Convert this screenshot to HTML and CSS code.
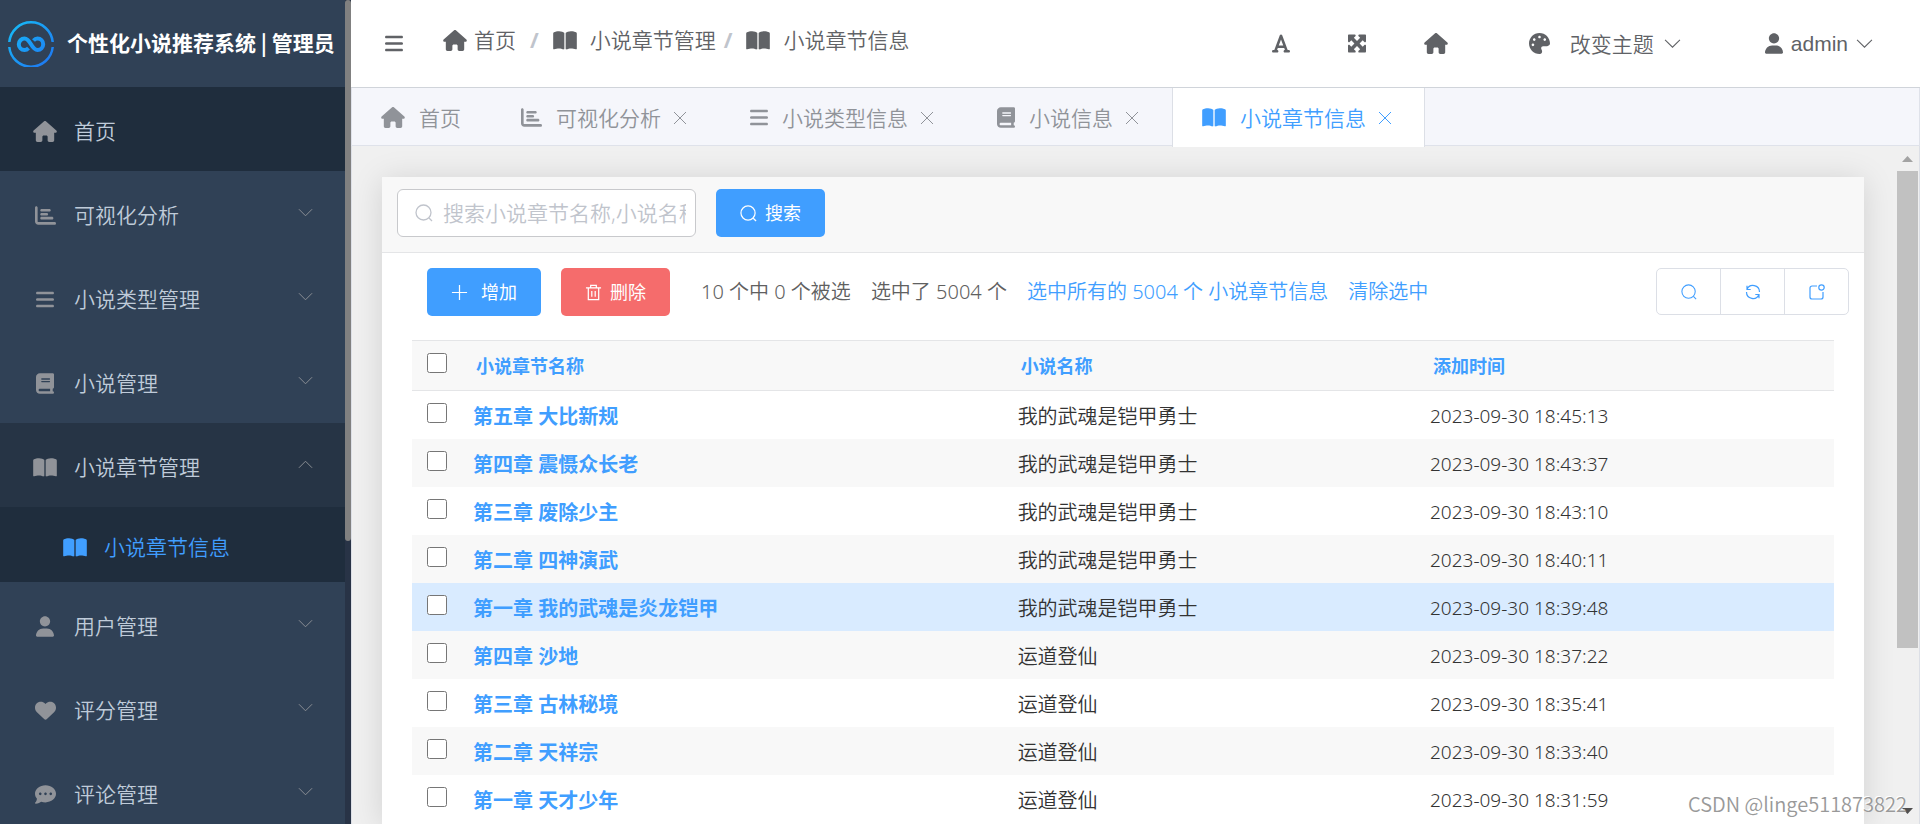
FILE: index.html
```html
<!DOCTYPE html>
<html lang="zh-CN">
<head>
<meta charset="utf-8">
<title>个性化小说推荐系统 | 管理员</title>
<link rel="stylesheet" href="styles.css">
</head>
<body>
<svg class="sprite" aria-hidden="true">
  <symbol id="i-home" viewBox="0 0 576 512"><path d="M575.8 255.5c0 18-15 32.1-32 32.1h-32l.7 160.2c0 2.7-.2 5.4-.5 8.1V472c0 22.1-17.9 40-40 40H392c-22.1 0-40-17.9-40-40V384c0-17.7-14.3-32-32-32H256c-17.7 0-32 14.3-32 32v88c0 22.1-17.9 40-40 40H104c-22.1 0-40-17.9-40-40V287.6H32c-18 0-32-14-32-32.1c0-9 3-17 10-24L266.4 8c7-7 15-8 22-8s15 2 21 7L564.8 231.5c8 7 12 15 11 24z"/></symbol>
  <symbol id="i-bars" viewBox="0 0 448 512"><path d="M0 96C0 78.3 14.3 64 32 64H416c17.7 0 32 14.3 32 32s-14.3 32-32 32H32C14.3 128 0 113.7 0 96zM0 256c0-17.7 14.3-32 32-32H416c17.7 0 32 14.3 32 32s-14.3 32-32 32H32c-17.7 0-32-14.3-32-32zM448 416c0 17.7-14.3 32-32 32H32c-17.7 0-32-14.3-32-32s14.3-32 32-32H416c17.7 0 32 14.3 32 32z"/></symbol>
  <symbol id="i-chart" viewBox="0 0 512 512"><path d="M32 32c17.7 0 32 14.3 32 32V400c0 8.8 7.2 16 16 16H480c17.7 0 32 14.3 32 32s-14.3 32-32 32H80c-44.2 0-80-35.8-80-80V64C0 46.3 14.3 32 32 32zm96 96c0-17.7 14.3-32 32-32H352c17.7 0 32 14.3 32 32s-14.3 32-32 32H160c-17.7 0-32-14.3-32-32zm32 64H288c17.7 0 32 14.3 32 32s-14.3 32-32 32H160c-17.7 0-32-14.3-32-32s14.3-32 32-32zm0 96H416c17.7 0 32 14.3 32 32s-14.3 32-32 32H160c-17.7 0-32-14.3-32-32s14.3-32 32-32z"/></symbol>
  <symbol id="i-book" viewBox="0 0 448 512"><path d="M96 0C43 0 0 43 0 96V416c0 53 43 96 96 96H416c17.7 0 32-14.3 32-32s-14.3-32-32-32V384c17.7 0 32-14.3 32-32V32c0-17.7-14.3-32-32-32H96zm0 384H352v64H96c-17.7 0-32-14.3-32-32s14.3-32 32-32zm32-240c0-8.8 7.2-16 16-16H336c8.8 0 16 7.2 16 16s-7.2 16-16 16H144c-8.8 0-16-7.2-16-16zm16 48H336c8.8 0 16 7.2 16 16s-7.2 16-16 16H144c-8.8 0-16-7.2-16-16s7.2-16 16-16z"/></symbol>
  <symbol id="i-open" viewBox="0 0 576 512"><path d="M249.6 471.5c10.8 3.8 22.4-4.1 22.4-15.5V78.6c0-4.2-1.6-8.4-5-11C247.4 52 202.4 32 144 32C93.5 32 46.3 45.3 18.1 56.1C6.8 60.5 0 71.7 0 83.8V454.1c0 11.9 12.8 20.2 24.1 16.5C55.6 460.1 105.5 448 144 448c33.9 0 79 14 105.6 23.5zm76.8 0C353 462 398.1 448 432 448c38.5 0 88.4 12.1 119.9 22.6c11.3 3.8 24.1-4.6 24.1-16.5V83.8c0-12.1-6.8-23.3-18.1-27.6C529.7 45.3 482.5 32 432 32c-58.4 0-103.4 20-123 35.6c-3.3 2.6-5 6.8-5 11V456c0 11.4 11.7 19.3 22.4 15.5z"/></symbol>
  <symbol id="i-user" viewBox="0 0 448 512"><path d="M224 256c70.7 0 128-57.3 128-128S294.7 0 224 0S96 57.3 96 128s57.3 128 128 128zm-45.7 48C79.8 304 0 383.8 0 482.3C0 498.7 13.3 512 29.7 512H418.3c16.4 0 29.7-13.3 29.7-29.7C448 383.8 368.2 304 269.7 304H178.3z"/></symbol>
  <symbol id="i-heart" viewBox="0 0 512 512"><path d="M47.6 300.4L228.3 469.1c7.5 7 17.4 10.9 27.7 10.9s20.2-3.9 27.7-10.9L464.4 300.4c30.4-28.3 47.6-68 47.6-109.5v-5.8c0-69.9-50.5-129.5-119.4-141C347 36.5 300.6 51.4 268 84L256 96 244 84c-32.6-32.6-79-47.5-124.6-39.9C50.5 55.6 0 115.2 0 185.1v5.8c0 41.5 17.2 81.2 47.6 109.5z"/></symbol>
  <symbol id="i-comment" viewBox="0 0 512 512"><path d="M256 448c141.4 0 256-93.1 256-208S397.4 32 256 32S0 125.1 0 240c0 45.1 17.7 86.8 47.7 120.9c-1.9 24.5-11.4 46.3-21.4 62.9c-5.5 9.2-11.1 16.6-15.2 21.6c-2.1 2.5-3.7 4.4-4.9 5.7l-1.6 1.7c-4.6 4.6-5.9 11.4-3.4 17.4c2.5 6 8.3 9.9 14.8 9.9c28.7 0 57.6-8.9 81.6-19.3c22.9-10 42.4-21.9 54.3-30.6c31.8 11.5 67 17.9 104.1 17.9zM128 208c17.7 0 32 14.3 32 32s-14.3 32-32 32s-32-14.3-32-32s14.3-32 32-32zm128 0c17.7 0 32 14.3 32 32s-14.3 32-32 32s-32-14.3-32-32s14.3-32 32-32zm128 0c17.7 0 32 14.3 32 32s-14.3 32-32 32s-32-14.3-32-32s14.3-32 32-32z"/></symbol>
  <symbol id="i-font" viewBox="0 0 448 512"><path d="M254 52.8C249.3 40.3 237.3 32 224 32s-25.3 8.3-30 20.8L57.8 416H32c-17.7 0-32 14.3-32 32s14.3 32 32 32h96c17.7 0 32-14.3 32-32s-14.3-32-32-32h-1.8l18-48H303.8l18 48H320c-17.7 0-32 14.3-32 32s14.3 32 32 32h96c17.7 0 32-14.3 32-32s-14.3-32-32-32H390.2L254 52.8zM279.8 304H168.2L224 155.1 279.8 304z"/></symbol>
  <symbol id="i-max" viewBox="32 0 448 512"><path d="M200 32H56C42.7 32 32 42.7 32 56V200c0 9.7 5.8 18.5 14.8 22.2s19.3 1.7 26.2-5.2l40-40 79 79-79 79L73 295c-6.9-6.9-17.2-8.9-26.2-5.2S32 302.3 32 312V456c0 13.3 10.7 24 24 24H200c9.7 0 18.5-5.8 22.2-14.8s1.7-19.3-5.2-26.2l-40-40 79-79 79 79-40 40c-6.9 6.9-8.9 17.2-5.2 26.2s12.5 14.8 22.2 14.8H456c13.3 0 24-10.7 24-24V312c0-9.7-5.8-18.5-14.8-22.2s-19.3-1.7-26.2 5.2l-40 40-79-79 79-79 40 40c6.9 6.9 17.2 8.9 26.2 5.2s14.8-12.5 14.8-22.2V56c0-13.3-10.7-24-24-24H312c-9.7 0-18.5 5.8-22.2 14.8s-1.7 19.3 5.2 26.2l40 40-79 79-79-79 40-40c6.9-6.9 8.9-17.2 5.2-26.2S209.7 32 200 32z"/></symbol>
  <symbol id="i-palette" viewBox="0 0 512 512"><path d="M512 256v2.7c-.4 36.5-33.6 61.3-70.1 61.3H344c-26.5 0-48 21.5-48 48c0 3.4 .4 6.7 1 9.9c2.1 10.2 6.5 20 10.8 29.9c6.1 13.8 12.1 27.5 12.1 42c0 31.8-21.6 60.7-53.4 62c-3.5 .1-7 .2-10.6 .2C114.6 512 0 397.4 0 256S114.6 0 256 0S512 114.6 512 256zM128 288c0-17.7-14.3-32-32-32s-32 14.3-32 32s14.3 32 32 32s32-14.3 32-32zm0-96c17.7 0 32-14.3 32-32s-14.3-32-32-32s-32 14.3-32 32s14.3 32 32 32zM288 96c0-17.7-14.3-32-32-32s-32 14.3-32 32s14.3 32 32 32s32-14.3 32-32zm96 96c17.7 0 32-14.3 32-32s-14.3-32-32-32s-32 14.3-32 32s14.3 32 32 32z"/></symbol>
  <symbol id="i-down" viewBox="0 0 16 16"><path class="line" d="M1 4.500l7 7 7-7"/></symbol>
  <symbol id="i-up" viewBox="0 0 16 16"><path class="line" d="M1 11.500l7-7 7 7"/></symbol>
  <symbol id="i-close" viewBox="0 0 14 14"><path class="line" d="M1 1l12 12M13 1L1 13"/></symbol>
  <symbol id="i-search" viewBox="0 0 18 18"><circle class="line" cx="8.500" cy="8.500" r="7.500"/><path class="line" d="M14 14l3 3"/></symbol>
  <symbol id="i-plus" viewBox="0 0 18 18"><path class="line" d="M9 1v16M1 9h16"/></symbol>
  <symbol id="i-trash" viewBox="0 0 18 18"><path class="line" d="M1 4h16M6 4V1.500h6V4M3.500 4v12.500h11V4M7.200 7.500v6M10.800 7.500v6"/></symbol>
  <symbol id="i-refresh" viewBox="0 0 16 16"><path class="line" d="M2 5.500A6.500 6.500 0 0 1 14.500 8M1.500 8A6.500 6.500 0 0 0 14 10.500M2 1.800v3.700h3.700M14 14.200v-3.700h-3.700"/></symbol>
  <symbol id="i-badge" viewBox="0 0 16 16"><path class="line" d="M8 2H3a2 2 0 0 0-2 2v9a2 2 0 0 0 2 2h9a2 2 0 0 0 2-2V8"/><circle class="line" cx="12.500" cy="3.500" r="2.700"/></symbol>
</svg>

<div class="app">
  <aside class="sidebar">
    <div class="side-main">
      <div class="brand">
        <svg class="logo" viewBox="0 0 46 46" aria-hidden="true">
          <defs><linearGradient id="lg" x1="0" y1="0" x2="46" y2="46" gradientUnits="userSpaceOnUse"><stop offset="0" stop-color="#16c0f8"/><stop offset="1" stop-color="#1f72f2"/></linearGradient></defs>
          <g fill="none" stroke="url(#lg)">
            <path stroke-width="2.500" d="M1.300 21A21.800 21.800 0 0 1 44.700 21M1.300 26A21.800 21.800 0 0 0 44.700 26"/>
            <path stroke-width="4" d="M25.500 19.500c1.200-1.300 2.500-1.900 4-1.900a5.700 5.700 0 0 1 0 11.400c-3.200 0-4.700-2.600-6.500-5.700s-3.300-5.700-6.500-5.700a5.700 5.700 0 0 0 0 11.400c1.500 0 2.800-.6 4-1.900"/>
          </g>
        </svg>
        <strong class="brand-name">个性化小说推荐系统 | 管理员</strong>
      </div>
      <nav class="menu">
        <a class="item dark" href="#"><span class="ico"><svg class="w24"><use href="#i-home"/></svg></span>首页</a>
        <button class="item"><span class="ico"><svg class="w21"><use href="#i-chart"/></svg></span>可视化分析<svg class="chev"><use href="#i-down"/></svg></button>
        <button class="item"><span class="ico"><svg class="w18"><use href="#i-bars"/></svg></span>小说类型管理<svg class="chev"><use href="#i-down"/></svg></button>
        <button class="item"><span class="ico"><svg class="w18"><use href="#i-book"/></svg></span>小说管理<svg class="chev"><use href="#i-down"/></svg></button>
        <button class="item open"><span class="ico"><svg class="w24"><use href="#i-open"/></svg></span>小说章节管理<svg class="chev"><use href="#i-up"/></svg></button>
        <a class="item sub" href="#"><span class="ico"><svg class="w24"><use href="#i-open"/></svg></span>小说章节信息</a>
        <button class="item"><span class="ico"><svg class="w18"><use href="#i-user"/></svg></span>用户管理<svg class="chev"><use href="#i-down"/></svg></button>
        <button class="item"><span class="ico"><svg class="w21"><use href="#i-heart"/></svg></span>评分管理<svg class="chev"><use href="#i-down"/></svg></button>
        <button class="item"><span class="ico"><svg class="w21"><use href="#i-comment"/></svg></span>评论管理<svg class="chev"><use href="#i-down"/></svg></button>
      </nav>
    </div>
    <div class="side-track"><div class="side-thumb"></div></div>
  </aside>

  <div class="main">
    <header class="topbar">
      <button class="plain" aria-label="折叠菜单"><svg class="w18"><use href="#i-bars"/></svg></button>
      <nav class="crumbs">
        <a class="first" href="#"><svg class="w24"><use href="#i-home"/></svg>首页</a>
        <span class="slash">/</span>
        <a href="#"><svg class="w24"><use href="#i-open"/></svg>小说章节管理</a>
        <span class="slash tight">/</span>
        <a href="#"><svg class="w24"><use href="#i-open"/></svg>小说章节信息</a>
      </nav>
      <div class="tools">
        <button class="plain" aria-label="字体"><svg class="w18"><use href="#i-font"/></svg></button>
        <button class="plain" aria-label="全屏"><svg class="w18"><use href="#i-max"/></svg></button>
        <button class="plain" aria-label="主页"><svg class="w24"><use href="#i-home"/></svg></button>
        <button class="plain theme"><svg class="w21"><use href="#i-palette"/></svg><span>改变主题</span><svg class="caret"><use href="#i-down"/></svg></button>
        <button class="plain account"><svg class="w18"><use href="#i-user"/></svg><span>admin</span><svg class="caret"><use href="#i-down"/></svg></button>
      </div>
    </header>

    <div class="tabs">
      <div class="tab"><a href="#"><svg class="w24"><use href="#i-home"/></svg>首页</a></div>
      <div class="tab"><a href="#"><svg class="w21"><use href="#i-chart"/></svg>可视化分析</a><button class="x" aria-label="关闭"><svg><use href="#i-close"/></svg></button></div>
      <div class="tab"><a href="#"><svg class="w18"><use href="#i-bars"/></svg>小说类型信息</a><button class="x" aria-label="关闭"><svg><use href="#i-close"/></svg></button></div>
      <div class="tab"><a href="#"><svg class="w18"><use href="#i-book"/></svg>小说信息</a><button class="x" aria-label="关闭"><svg><use href="#i-close"/></svg></button></div>
      <div class="tab active"><a href="#"><svg class="w24"><use href="#i-open"/></svg>小说章节信息</a><button class="x" aria-label="关闭"><svg><use href="#i-close"/></svg></button></div>
    </div>

    <div class="body">
      <main class="scroll">
        <section class="card">
          <form class="search">
            <label class="field"><svg><use href="#i-search"/></svg><input type="text" aria-label="搜索" placeholder="搜索小说章节名称,小说名称"></label>
            <button type="button" class="btn primary"><svg><use href="#i-search"/></svg>搜索</button>
          </form>
          <div class="actions">
            <button class="btn primary add"><svg><use href="#i-plus"/></svg>增加</button>
            <button class="btn danger"><svg><use href="#i-trash"/></svg>删除</button>
            <div class="counts">
              <span>10 个中 0 个被选</span>
              <span>选中了 5004 个</span>
              <a href="#">选中所有的 5004 个 小说章节信息</a>
              <a href="#">清除选中</a>
            </div>
            <div class="group">
              <button aria-label="搜索"><svg><use href="#i-search"/></svg></button>
              <button aria-label="刷新"><svg><use href="#i-refresh"/></svg></button>
              <button aria-label="新窗口"><svg><use href="#i-badge"/></svg></button>
            </div>
          </div>
          <div class="table-wrap">
            <table>
              <colgroup><col class="c0"><col class="c1"><col class="c2"><col class="c3"></colgroup>
              <thead><tr><th><input type="checkbox" aria-label="全选"></th><th>小说章节名称</th><th>小说名称</th><th>添加时间</th></tr></thead>
              <tbody>
                <tr><td><input type="checkbox" aria-label="选择"></td><th><a href="#">第五章 大比新规</a></th><td>我的武魂是铠甲勇士</td><td class="time">2023-09-30 18:45:13</td></tr>
                <tr><td><input type="checkbox" aria-label="选择"></td><th><a href="#">第四章 震慑众长老</a></th><td>我的武魂是铠甲勇士</td><td class="time">2023-09-30 18:43:37</td></tr>
                <tr><td><input type="checkbox" aria-label="选择"></td><th><a href="#">第三章 废除少主</a></th><td>我的武魂是铠甲勇士</td><td class="time">2023-09-30 18:43:10</td></tr>
                <tr><td><input type="checkbox" aria-label="选择"></td><th><a href="#">第二章 四神演武</a></th><td>我的武魂是铠甲勇士</td><td class="time">2023-09-30 18:40:11</td></tr>
                <tr class="hover"><td><input type="checkbox" aria-label="选择"></td><th><a href="#">第一章 我的武魂是炎龙铠甲</a></th><td>我的武魂是铠甲勇士</td><td class="time">2023-09-30 18:39:48</td></tr>
                <tr><td><input type="checkbox" aria-label="选择"></td><th><a href="#">第四章 沙地</a></th><td>运道登仙</td><td class="time">2023-09-30 18:37:22</td></tr>
                <tr><td><input type="checkbox" aria-label="选择"></td><th><a href="#">第三章 古林秘境</a></th><td>运道登仙</td><td class="time">2023-09-30 18:35:41</td></tr>
                <tr><td><input type="checkbox" aria-label="选择"></td><th><a href="#">第二章 天祥宗</a></th><td>运道登仙</td><td class="time">2023-09-30 18:33:40</td></tr>
                <tr><td><input type="checkbox" aria-label="选择"></td><th><a href="#">第一章 天才少年</a></th><td>运道登仙</td><td class="time">2023-09-30 18:31:59</td></tr>
              </tbody>
            </table>
          </div>
        </section>
      </main>
      <div class="track">
        <svg class="arrow up" viewBox="0 0 11 6"><path d="M0 6L5.500 0 11 6z"/></svg>
        <div class="thumb"></div>
        <svg class="arrow down" viewBox="0 0 11 6"><path d="M0 0L5.500 6 11 0z"/></svg>
      </div>
    </div>
  </div>
</div>
<div class="watermark">CSDN @linge511873822</div>
</body>
</html>
```
FILE: styles.css
```css
* { box-sizing: border-box; }

body {
  margin: 0;
  color: #333;
  font: 350 21px/30px "Noto Sans", "Noto Sans CJK SC", sans-serif;
  overflow: hidden;
}

a { color: inherit; text-decoration: none; }
button { margin: 0; padding: 0; border: 0; background: none; color: inherit; font: inherit; cursor: pointer; }
svg { flex: none; fill: currentColor; }
.sprite { position: absolute; width: 0; height: 0; }
.line { fill: none; stroke: currentColor; }

.w18, .w21, .w24 { height: 21px; }
.w18 { width: 18px; }
.w21 { width: 21px; }
.w24 { width: 24px; }

.app { display: flex; height: 100vh; }

/* sidebar */
.sidebar { display: flex; flex: none; width: 351px; background: #304156; overflow: hidden; }
.side-main { flex: 1; min-width: 0; }
.side-track { width: 6px; background: #283346; }
.side-thumb { height: 541px; border-radius: 3px; background: #808080; }

.brand { display: flex; align-items: center; gap: 13px; height: 87px; padding-left: 8px; color: #fff; }
.logo { width: 46px; height: 46px; }
.brand-name { padding-bottom: 3px; font-family: "Noto Sans CJK SC", sans-serif; font-weight: 700; white-space: nowrap; }

.item {
  display: flex;
  align-items: center;
  width: 100%;
  height: 84px;
  padding: 4px 32px 0 30px;
  color: #bfcbd9;
}
.ico { display: flex; justify-content: center; width: 30px; margin-right: 14px; color: #909399; }
.chev { width: 15px; height: 15px; margin: 0 0 6px auto; color: #909399; }
.dark { background: #1f2d3d; }
.open { background: #263445; }
.sub { height: 75px; padding: 5px 30px 0 60px; background: #1f2d3d; color: #409eff; }
.sub .ico { color: #409eff; }

/* top bar */
.main { display: flex; flex: 1; flex-direction: column; min-width: 0; }
.topbar {
  display: flex;
  flex: none;
  align-items: center;
  height: 88px;
  padding: 0 47px 0 34px;
  border-bottom: 1px solid #d0d4da;
  background: #fff;
  color: #606266;
}
.plain { display: flex; align-items: center; }
.crumbs { display: flex; align-items: center; margin-left: 40px; padding-bottom: 7px; }
.crumbs a { display: flex; align-items: center; gap: 13px; }
.crumbs .first { gap: 7px; }
.slash { margin: 0 14px; color: #c0c4cc; font-weight: 700; }
.tight { margin: 0 14px 0 8px; }
.tools { display: flex; align-items: center; margin-left: auto; gap: 58px; }
.theme { margin-left: 23px; gap: 10px; }
.theme span { margin-left: 10px; }
.account { margin-left: 26px; gap: 8px; font-family: "Liberation Sans", sans-serif; }
.caret { width: 17px; height: 17px; }

/* tabs */
.tabs {
  display: flex;
  flex: none;
  height: 58px;
  border: 1px solid #dfe2ea;
  border-top: 0;
  background: #f5f6fb;
  color: #909399;
}
.tab { display: flex; align-items: center; height: 59px; margin-left: -1px; padding: 0 29px; border: solid transparent; border-width: 0 1px; }
.tab + .tab { margin-left: 0; }
.tab a { display: flex; align-items: center; gap: 14px; }
.x { display: flex; align-items: center; justify-content: center; width: 21px; height: 21px; margin-left: 8px; }
.x svg { width: 14px; height: 14px; }
.active { position: relative; z-index: 1; border-color: #dcdfe6; background: #fff; color: #409eff; }

/* content */
.body { display: flex; flex: 1; min-height: 0; border-right: 1px solid #dcdfe6; border-left: 1px solid #dcdfe6; background: #f0f0f0; }
.scroll { flex: 1; min-width: 0; padding: 31px 31px 0 30px; overflow: hidden; }
.card { min-height: 100%; background: #fff; box-shadow: 0 3px 30px rgba(0, 0, 0, .13); }

.search { display: flex; gap: 20px; padding: 12px 15px 15px; border-bottom: 1px solid #e4e5e7; background: #f8f8f8; }
.field { display: flex; align-items: center; gap: 10px; width: 299px; height: 48px; padding: 0 9px 0 17px; border: 1px solid #c8c9cc; border-radius: 6px; background: #fff; color: #c0c4cc; }
.field svg { width: 18px; height: 18px; stroke-width: 1.3; }
.field input { flex: 1; min-width: 0; height: 30px; padding: 0; border: 0; outline: 0; background: none; color: #606266; font: inherit; }
.field input::placeholder { color: #c0c4cc; opacity: 1; }

.btn { display: flex; align-items: center; justify-content: center; gap: 8px; width: 109px; height: 48px; border-radius: 5px; color: #fff; font-size: 18px; font-weight: 400; }
.btn svg { width: 17px; height: 17px; stroke-width: 1.3; }
.primary { background: #409eff; }
.danger { background: #f56c6c; }
.add { width: 114px; gap: 13px; }

.actions { display: flex; align-items: flex-start; gap: 20px; padding: 15px 15px 0 45px; }
.counts { display: flex; gap: 20px; margin-left: 11px; padding-top: 9px; color: #606060; font-size: 20px; white-space: nowrap; }
.counts a { color: #409eff; }
.group { display: flex; margin-left: auto; border: 1px solid #dcdfe6; border-radius: 5px; color: #409eff; }
.group button { display: flex; align-items: center; justify-content: center; width: 63px; height: 45px; }
.group button + button { width: 64px; border-left: 1px solid #dcdfe6; }
.group svg { width: 16px; height: 16px; stroke-width: 1.2; }

.table-wrap { padding: 24px 30px 0; }
table { width: 100%; border-collapse: separate; border-spacing: 0; table-layout: fixed; font-size: 20px; }
.c0 { width: 46px; }
.c1 { width: 38.300%; }
.c2 { width: 29%; }
th, td { height: 48px; padding: 3px 0 0 15px; text-align: left; white-space: nowrap; }
td:first-child, th:first-child { padding: 0 0 5px 15px; }
thead th { height: 51px; padding: 0 0 0 18px; border: solid #e4e5e7; border-width: 1px 0; background: #f8f8f8; color: #409eff; font-size: 18px; font-weight: 700; }
tbody th { color: #409eff; font-weight: 700; }
tbody tr:nth-child(even) { background: #f8f8f8; }
tbody .hover { background: #d9ebff; }
.time { padding-top: 1px; font-size: 19px; }
table input { display: block; width: 20px; height: 20px; margin: 0; }

.track { display: flex; flex: none; flex-direction: column; align-items: center; width: 24px; padding: 10px 1px; }
.arrow { width: 11px; height: 6px; fill: #a3a3a3; }
.thumb { width: 21px; height: 477px; margin: 9px 0 auto; background: #c1c1c1; }
.down { fill: #505050; }

.watermark { position: absolute; right: 13px; bottom: 5px; color: #999; font-family: "Noto Sans CJK SC", sans-serif; font-size: 20px; text-shadow: -1px -1px 0 #fff; }
```
